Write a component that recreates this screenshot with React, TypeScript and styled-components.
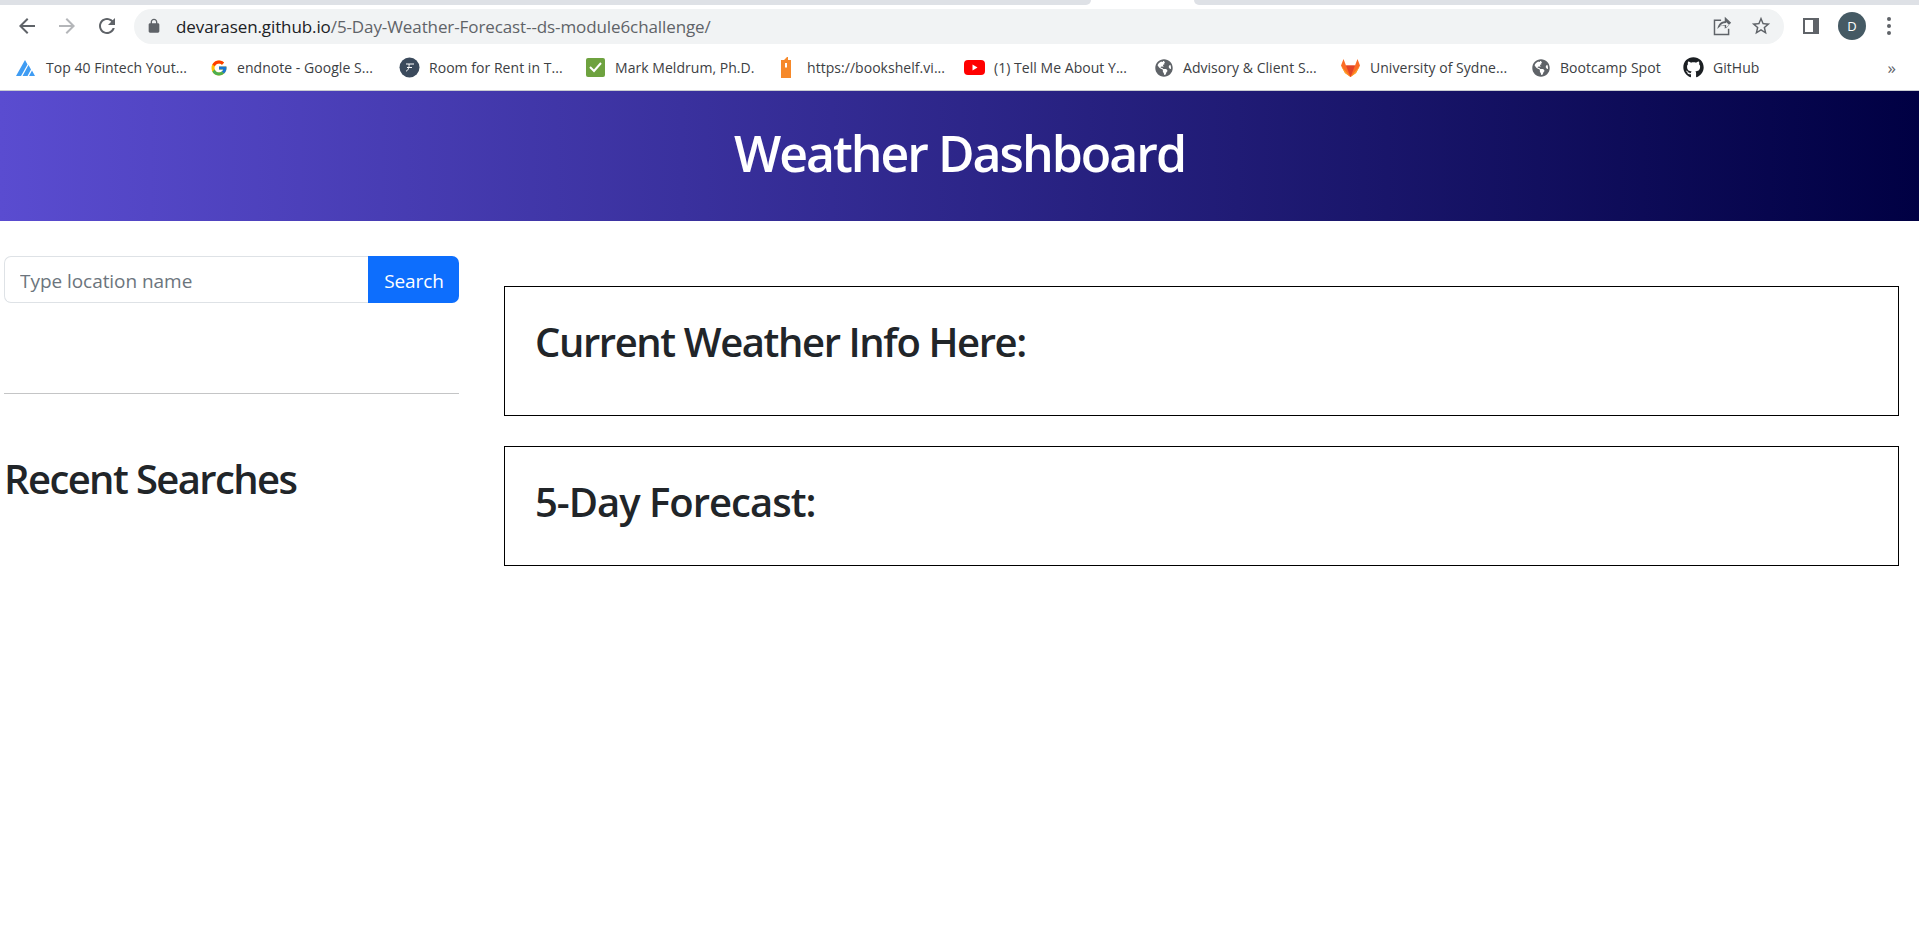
import React from "react";
import styled, { createGlobalStyle } from "styled-components";
import { FcGoogle } from "react-icons/fc";
import { FaGithub, FaGlobeAmericas } from "react-icons/fa";

const Global = createGlobalStyle`
  html, body { margin: 0; padding: 0; background: #fff; }
  body { font-family: "Open Sans", "Liberation Sans", sans-serif; color: #212529; }
  * { box-sizing: border-box; }
`;

const Page = styled.div`
  width: 1919px;
  height: 948px;
  overflow: hidden;
  background: #fff;
`;

const TabStrip = styled.div`
  height: 5px;
  display: flex;
  background: #fff;
`;
const TabPiece = styled.div<{ $w: number; $round: "right" | "left" | "none" }>`
  height: 5px;
  background: #dee1e6;
  width: ${(p) => p.$w}px;
  flex: ${(p) => (p.$round === "left" ? "1" : "none")};
  border-bottom-right-radius: ${(p) => (p.$round === "right" ? "8px" : "0")};
  border-bottom-left-radius: ${(p) => (p.$round === "left" ? "8px" : "0")};
`;
const TabGap = styled.div`
  width: 103px;
`;

const Toolbar = styled.div`
  height: 40px;
  padding-top: 2px;
  display: flex;
  align-items: center;
  padding-left: 15px;
`;
const NavIcon = styled.svg<{ $muted?: boolean }>`
  width: 24px;
  height: 24px;
  flex: none;
  margin-right: 16px;
  fill: ${(p) => (p.$muted ? "#b4b6b9" : "#5f6368")};
`;
const Omnibox = styled.div`
  width: 1650px;
  height: 35px;
  margin-left: -1px;
  border-radius: 18px;
  background: #f1f3f4;
  display: flex;
  align-items: center;
  padding-left: 12px;
  padding-right: 12px;
`;
const Lock = styled.svg`
  width: 16px;
  height: 16px;
  fill: #5f6368;
  flex: none;
`;
const Url = styled.div`
  margin-left: 14px;
  font-size: 17px;
  letter-spacing: -0.1px;
  color: #5f6368;
  white-space: nowrap;
  flex: 1;
`;
const Host = styled.span`
  color: #202124;
`;
const OmniIcon = styled.svg`
  width: 22px;
  height: 22px;
  flex: none;
  margin-left: 17px;
  fill: #5f6368;
`;
const ToolIcon = styled.svg`
  width: 24px;
  height: 24px;
  flex: none;
  margin-left: 15px;
  fill: #5f6368;
`;
const Avatar = styled.div`
  width: 28px;
  height: 28px;
  margin-left: 15px;
  flex: none;
  border-radius: 50%;
  background: #455a64;
  color: #fff;
  font-size: 13px;
  display: flex;
  align-items: center;
  justify-content: center;
`;
const Dots = styled.svg`
  width: 24px;
  height: 24px;
  flex: none;
  margin-left: 11px;
  fill: #5f6368;
`;

const BookmarkBar = styled.div`
  height: 46px;
  display: flex;
  align-items: center;
  padding-left: 16px;
  border-bottom: 1px solid #c9ccd1;
`;
const Bookmark = styled.div<{ $w: number }>`
  width: ${(p) => p.$w}px;
  flex: none;
  display: flex;
  align-items: center;
  gap: 9px;
  font-size: 14px;
  letter-spacing: 0.04px;
  color: #3c4043;
  white-space: nowrap;
  overflow: hidden;
`;
const Fav = styled.svg`
  width: 21px;
  height: 21px;
  flex: none;
`;
const More = styled.div`
  margin-left: auto;
  margin-right: 23px;
  font-size: 17px;
  color: #5f6368;
  line-height: 1;
`;

const Banner = styled.header`
  height: 130px;
  padding-bottom: 6px;
  background: linear-gradient(90deg, #5a4cd0 0%, #000043 100%);
  display: flex;
  align-items: center;
  justify-content: center;
`;
const Title = styled.h1`
  margin: 0;
  color: #fff;
  font-size: 50px;
  font-weight: 600;
  letter-spacing: -2px;
  line-height: 1.2;
`;

const Content = styled.main`
  display: flex;
  align-items: flex-start;
  padding: 35px 20px 0 4px;
`;
const Sidebar = styled.aside`
  width: 455px;
  flex: none;
`;
const SearchRow = styled.form`
  display: flex;
  height: 47px;
  margin: 0;
`;
const SearchInput = styled.input`
  flex: 1;
  min-width: 0;
  height: 47px;
  border: 1px solid #dee2e6;
  border-right: 0;
  border-radius: 7px 0 0 7px;
  padding: 2px 15px 0;
  font: 400 19px "Open Sans", sans-serif;
  letter-spacing: -0.05px;
  outline: none;
  &::placeholder {
    color: #6c757d;
    opacity: 1;
  }
`;
const SearchButton = styled.button`
  width: 91px;
  height: 47px;
  border: 0;
  border-radius: 0 7px 7px 0;
  background: #0d6efd;
  color: #fff;
  font: 400 19px "Open Sans", sans-serif;
  letter-spacing: -0.1px;
  padding: 2px 0 0 1px;
`;
const Rule = styled.hr`
  margin: 90px 0 0;
  border: 0;
  border-top: 1px solid #c4c5c6;
`;
const SideHeading = styled.h2`
  margin: 61px 0 0;
  font-size: 40px;
  font-weight: 600;
  letter-spacing: -1.6px;
  line-height: 1.2;
`;
const Panels = styled.section`
  flex: 1;
  margin-left: 45px;
  padding-top: 30px;
  display: flex;
  flex-direction: column;
  gap: 30px;
`;
const Panel = styled.div<{ $h: number }>`
  height: ${(p) => p.$h}px;
  border: 1px solid #000;
  padding: 31px 29px 0 30px;
`;
const PanelHeading = styled.h2<{ $tight: number }>`
  margin: 0;
  font-size: 40px;
  font-weight: 600;
  letter-spacing: ${(p) => p.$tight}px;
  line-height: 1.2;
`;

const Globe = () => <FaGlobeAmericas size={18} color="#5f6368" style={{ flex: "none", margin: "0 1px 0 2px" }} />;

export default function App() {
  return (
    <Page>
      <Global />
      <TabStrip>
        <TabPiece $w={1091} $round="right" />
        <TabGap />
        <TabPiece $w={725} $round="left" />
      </TabStrip>
      <Toolbar>
        <NavIcon viewBox="0 0 24 24"><path d="M20 11H7.83l5.59-5.59L12 4l-8 8 8 8 1.41-1.41L7.83 13H20v-2z" /></NavIcon>
        <NavIcon $muted viewBox="0 0 24 24"><path d="M4 11h12.17l-5.59-5.59L12 4l8 8-8 8-1.41-1.41L16.17 13H4v-2z" /></NavIcon>
        <NavIcon viewBox="0 0 24 24"><path d="M17.65 6.35C16.2 4.9 14.21 4 12 4c-4.42 0-7.99 3.58-7.99 8s3.57 8 7.99 8c3.73 0 6.84-2.55 7.73-6h-2.08c-.82 2.33-3.04 4-5.65 4-3.31 0-6-2.69-6-6s2.69-6 6-6c1.66 0 3.14.69 4.22 1.78L13 11h7V4l-2.35 2.35z" /></NavIcon>
        <Omnibox>
          <Lock viewBox="0 0 24 24"><path d="M18 8h-1V6c0-2.76-2.24-5-5-5S7 3.24 7 6v2H6c-1.1 0-2 .9-2 2v10c0 1.1.9 2 2 2h12c1.1 0 2-.9 2-2V10c0-1.1-.9-2-2-2zM9 6c0-1.66 1.34-3 3-3s3 1.34 3 3v2H9V6z" /></Lock>
          <Url><Host>devarasen.github.io</Host>/5-Day-Weather-Forecast--ds-module6challenge/</Url>
          <OmniIcon viewBox="0 0 24 24"><path fillRule="evenodd" d="M3 5h8v1.6H4.6v13.8h13.8V15H20v7H3V5zm12-3 7 6.500-7 6.500v-3.600c-3.800 0-6 1.200-8 4 .5-4.600 3-8 8-8.600V2zm1.500 3.400V8.700c-3.700.1-5.900 1.800-7 4 1.800-1.300 4-1.800 7-1.700v3.400l3.300-3.400-3.300-3.400z" /></OmniIcon>
          <OmniIcon viewBox="0 0 24 24"><path d="M22 9.240l-7.190-.62L12 2 9.190 8.630 2 9.240l5.460 4.730L5.820 21 12 17.270 18.180 21l-1.630-7.030L22 9.240zM12 15.400l-3.760 2.270 1-4.280-3.320-2.880 4.380-.38L12 6.100l1.710 4.040 4.380.38-3.320 2.880 1 4.280L12 15.400z" /></OmniIcon>
        </Omnibox>
        <ToolIcon viewBox="0 0 24 24"><path fillRule="evenodd" d="M4 4h16v16H4V4zm2 2v12h8V6H6z" /></ToolIcon>
        <Avatar>D</Avatar>
        <Dots viewBox="0 0 24 24"><circle cx="12" cy="5" r="2" /><circle cx="12" cy="12" r="2" /><circle cx="12" cy="19" r="2" /></Dots>
      </Toolbar>
      <BookmarkBar>
        <Bookmark $w={193}>
          <Fav viewBox="0 0 21 21"><path fill="#3f9cf3" d="M0 19 9 3l2.500 4.500L5 19zM6.500 19l6-11 2.500 4.500L11.500 19zM13 19l3-5.500 3 5.500z" /></Fav>
          Top 40 Fintech Yout...
        </Bookmark>
        <Bookmark $w={190}>
          <FcGoogle size={18} style={{ flex: "none", marginLeft: "1px" }} />
          endnote - Google S...
        </Bookmark>
        <Bookmark $w={186}>
          <Fav viewBox="0 0 21 21"><circle cx="10.500" cy="10.500" r="10" fill="#3b4a5c" /><path d="M7 7h8M10 7c.5 3-1 7-3 7M8 10.500h5" fill="none" stroke="#fff" strokeWidth="1" /></Fav>
          Room for Rent in T...
        </Bookmark>
        <Bookmark $w={192}>
          <Fav viewBox="0 0 21 21"><rect x="1" y="1" width="19" height="19" rx="2" fill="#6ea23f" /><path d="m5 10 4 4 7-8" fill="none" stroke="#fff" strokeWidth="2" /></Fav>
          Mark Meldrum, Ph.D.
        </Bookmark>
        <Bookmark $w={187}>
          <Fav viewBox="0 0 21 21"><path fill="#f6892a" d="M4 3h3l3-3h1v3h3v18H4z" /><path fill="#fff" d="M8 6h2v5l-1-1-1 1z" /></Fav>
          https://bookshelf.vi...
        </Bookmark>
        <Bookmark $w={189}>
          <Fav viewBox="0 0 21 21"><rect y="3" width="21" height="15" rx="4" fill="#f00" /><path fill="#fff" d="m8.500 7.500 5 3-5 3z" /></Fav>
          (1) Tell Me About Y...
        </Bookmark>
        <Bookmark $w={187}>
          <Globe />
          Advisory &amp; Client S...
        </Bookmark>
        <Bookmark $w={190}>
          <Fav viewBox="0 0 21 21">
            <path fill="#e24329" d="m10.500 20-6-8h12z" />
            <path fill="#fc6d26" d="M1 8.500 3.500 2l2.500 6.500h9L17.500 2 20 8.500 16 16l-5.500 4L5 16z" />
            <path fill="#e24329" d="M6 8.500h9L10.500 20z" />
            <path fill="#fca326" d="m1 9 4 7 5.500 4zM20 9l-4 7-5.500 4z" />
          </Fav>
          University of Sydne...
        </Bookmark>
        <Bookmark $w={153}>
          <Globe />
          Bootcamp Spot
        </Bookmark>
        <Bookmark $w={100}>
          <FaGithub size={21} color="#1b1f23" style={{ flex: "none" }} />
          GitHub
        </Bookmark>
        <More>»</More>
      </BookmarkBar>
      <Banner>
        <Title>Weather Dashboard</Title>
      </Banner>
      <Content>
        <Sidebar>
          <SearchRow>
            <SearchInput placeholder="Type location name" />
            <SearchButton type="button">Search</SearchButton>
          </SearchRow>
          <Rule />
          <SideHeading>Recent Searches</SideHeading>
        </Sidebar>
        <Panels>
          <Panel $h={130}>
            <PanelHeading $tight={-1.4}>Current Weather Info Here:</PanelHeading>
          </Panel>
          <Panel $h={120}>
            <PanelHeading $tight={-1}>5-Day Forecast:</PanelHeading>
          </Panel>
        </Panels>
      </Content>
    </Page>
  );
}
